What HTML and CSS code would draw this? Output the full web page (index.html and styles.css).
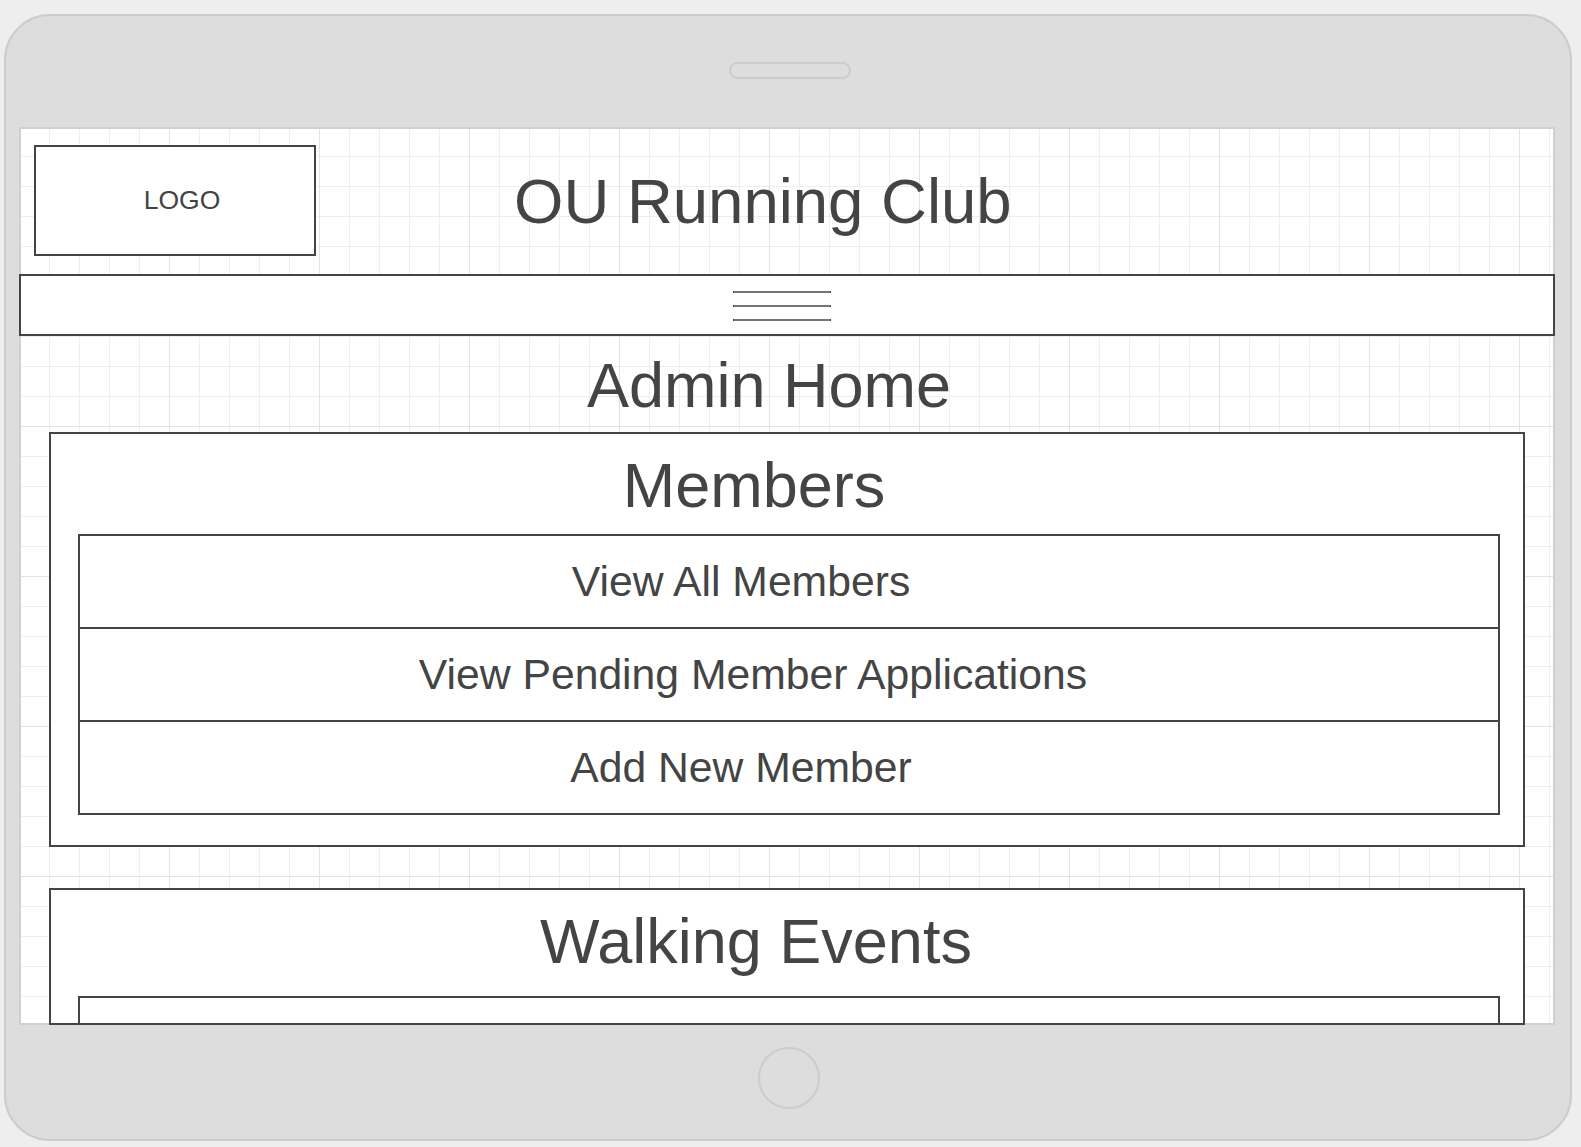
FILE: index.html
```html
<!DOCTYPE html>
<html lang="en">
<head>
<meta charset="utf-8">
<title>OU Running Club - Admin Home</title>
<link rel="stylesheet" href="styles.css">
</head>
<body>
<div class="device">
  <div class="speaker"></div>
  <div class="screen">
    <header class="header">
      <div class="logo">LOGO</div>
      <h1 class="site-title">OU Running Club</h1>
    </header>
    <nav class="navbar">
      <div class="burger"><span></span><span></span><span></span></div>
    </nav>
    <h2 class="page-title">Admin Home</h2>
    <section class="panel">
      <h3 class="panel-title">Members</h3>
      <ul class="menu">
        <li class="menu-item">View All Members</li>
        <li class="menu-item menu-item--wide">View Pending Member Applications</li>
        <li class="menu-item">Add New Member</li>
      </ul>
    </section>
    <section class="panel panel--events">
      <h3 class="panel-title">Walking Events</h3>
      <ul class="menu">
        <li class="menu-item"></li>
      </ul>
    </section>
  </div>
  <div class="home-button"></div>
</div>
</body>
</html>
```

FILE: styles.css
```css
* {
  box-sizing: border-box;
}

html, body {
  margin: 0;
  padding: 0;
}

body {
  background: #eeeeee;
  font-family: "Liberation Sans", Arial, sans-serif;
  color: #444444;
}

.device {
  margin: 14px 0 0 4px;
  width: 1568px;
  height: 1127px;
  border: 2px solid #cccccc;
  border-radius: 46px;
  background: #dddddd;
  display: flex;
  flex-direction: column;
  padding: 0 15px 0 13px;
}

.speaker {
  flex-shrink: 0;
  align-self: center;
  margin: 46px 0 0 6px;
  width: 122px;
  height: 17px;
  border: 2px solid #cccccc;
  border-radius: 9px;
}

.screen {
  flex-shrink: 0;
  margin-top: 48px;
  height: 898px;
  display: flex;
  flex-direction: column;
  overflow: hidden;
  background-color: #ffffff;
  background-image:
    linear-gradient(to right, #e3e3e3 1px, transparent 1px),
    linear-gradient(to bottom, #e3e3e3 1px, transparent 1px),
    linear-gradient(to right, #eeeeee 1px, transparent 1px),
    linear-gradient(to bottom, #eeeeee 1px, transparent 1px);
  background-size: 150px 150px, 150px 150px, 30px 30px, 30px 30px;
  background-position: 0 -1px, 0 -1px, 0 -1px, 0 -1px;
  box-shadow: inset 0 0 0 2px #d0d0d0;
}

.header {
  flex-shrink: 0;
  display: flex;
  align-items: center;
  padding: 18px 0 0 15px;
}

.logo {
  width: 282px;
  height: 111px;
  border: 2px solid #444444;
  background: #ffffff;
  display: flex;
  align-items: center;
  justify-content: center;
  padding-left: 14px;
  font-size: 26.5px;
  line-height: 1;
}

.site-title {
  margin: 3px 0 0 198px;
  font-size: 63.5px;
  font-weight: normal;
  line-height: 1;
}

.navbar {
  flex-shrink: 0;
  margin-top: 18px;
  height: 62px;
  border: 2px solid #444444;
  background: #ffffff;
  display: flex;
  align-items: center;
  justify-content: center;
}

.burger {
  width: 98px;
  margin: 2px 10px 0 0;
  display: flex;
  flex-direction: column;
  gap: 12px;
}

.burger span {
  display: block;
  height: 2px;
  background: #767676;
  border-left: 1px solid #444444;
  border-right: 1px solid #444444;
}

.page-title {
  flex-shrink: 0;
  margin: 18px 0 15px;
  padding-right: 36px;
  font-size: 63px;
  font-weight: normal;
  line-height: 1;
  text-align: center;
}

.panel {
  flex-shrink: 0;
  margin: 0 30px;
  border: 2px solid #444444;
  background: #ffffff;
  padding: 20px 23px 30px 27px;
}

.panel + .panel {
  margin-top: 41px;
}

.panel--events {
  flex: 1 1 auto;
  min-height: 0;
  overflow: hidden;
}

.panel-title {
  margin: 0 0 17px;
  padding-right: 70px;
  font-size: 63px;
  font-weight: normal;
  line-height: 1;
  text-align: center;
}

.panel--events .panel-title {
  margin-bottom: 23px;
  padding-right: 66px;
}

.menu {
  list-style: none;
  margin: 0;
  padding: 0;
  border: 2px solid #444444;
}

.menu-item {
  height: 91px;
  display: flex;
  align-items: center;
  justify-content: center;
  padding-right: 96px;
  font-size: 42.7px;
  line-height: 1;
}

.menu-item + .menu-item {
  height: 93px;
  border-top: 2px solid #444444;
}

.menu-item--wide {
  padding-right: 72px;
}

.home-button {
  flex-shrink: 0;
  align-self: center;
  margin: 22px 0 0 3px;
  width: 62px;
  height: 62px;
  border: 2px solid #cccccc;
  border-radius: 50%;
}
```
